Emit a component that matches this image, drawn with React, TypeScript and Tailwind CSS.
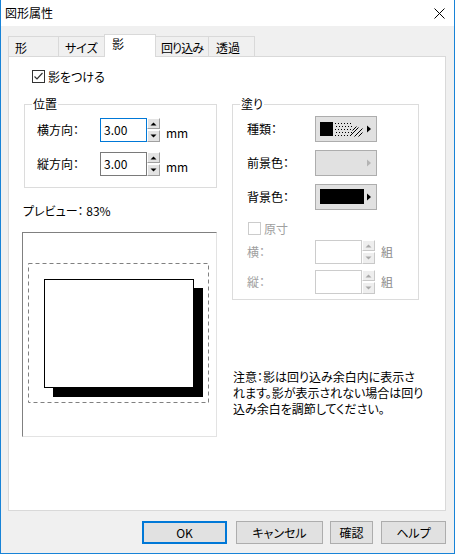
import React from 'react'

const tabs = [
  { label: '形', w: 'w-[51px] pl-[6px]' },
  { label: 'サイズ', w: 'w-[47px] pl-[6px]' },
  { label: '影', w: 'w-[52px]', active: true },
  { label: '回り込み', w: 'w-[54px] pl-[5px] tracking-[-0.9px]' },
  { label: '透過', w: 'w-[47px] pl-[7px]' },
]

function Check({ checked, disabled }: { checked?: boolean; disabled?: boolean }) {
  return (
    <div
      className={
        'w-[13px] h-[13px] shrink-0 border bg-white ' +
        (disabled ? 'border-[#cccccc]' : 'border-[#333333]')
      }
    >
      {checked && (
        <svg width="11" height="11" viewBox="0 0 11 11">
          <path d="M1.5 5.5 L4 8 L9.5 2" fill="none" stroke="#333" strokeWidth="1.2" />
        </svg>
      )}
    </div>
  )
}

function Arrow({ up, color }: { up?: boolean; color: string }) {
  return (
    <svg width="7" height="4" viewBox="0 0 7 4">
      <path d={up ? 'M0.5 3.5 L3.5 0.5 L6.5 3.5 Z' : 'M0.5 0.5 L3.5 3.5 L6.5 0.5 Z'} fill={color} />
    </svg>
  )
}

function Spin({ disabled }: { disabled?: boolean }) {
  const c = disabled ? '#a8a8a8' : '#000'
  const half =
    'h-[11px] flex items-center justify-center border border-t-white border-l-white ' +
    (disabled ? 'bg-[#eeeeee] border-r-[#c8c8c8] border-b-[#c8c8c8]' : 'bg-[#e3e3e3] border-r-[#a0a0a0] border-b-[#a0a0a0]')
  return (
    <div className="w-[13px] h-[24px] flex flex-col justify-between shrink-0">
      <div className={half}>
        <Arrow up color={c} />
      </div>
      <div className={half + ' h-[12px]'}>
        <Arrow color={c} />
      </div>
    </div>
  )
}

function Group({ title, children }: { title: string; children: React.ReactNode }) {
  return (
    <fieldset className="border border-[#dcdcdc]">
      <legend className="ml-[7px] px-[1px] leading-[16px]">{title}</legend>
      {children}
    </fieldset>
  )
}

function FillButton({ kind }: { kind: 'pattern' | 'disabled' | 'black' }) {
  return (
    <div className="w-[62px] h-[26px] border border-[#adadad] bg-[#e1e1e1]">
      <svg width="60" height="24" viewBox="0 0 60 24">
        {kind === 'pattern' && (
          <g>
            <rect x="4" y="5" width="13" height="14" fill="#000" />
            {[6, 9, 12, 15, 18].map((y, r) =>
              [19, 22, 25, 28, 31, 34].map((x) => (
                <rect key={x + '-' + y} x={x + (r % 2)} y={y} width="1" height="1" fill="#000" />
              ))
            )}
            <path d="M34.5 18.5 L42.5 10.5 M38.5 19.5 L46.5 11.5 M42.5 19.5 L46.5 15.5 M36.5 13.5 L40.5 9.5" stroke="#000" strokeWidth="1" />
          </g>
        )}
        {kind === 'black' && <rect x="4" y="4" width="44" height="15" fill="#000" />}
        <path d="M51 8.5 L55 12 L51 15.5 Z" fill={kind === 'disabled' ? '#b4b4b4' : '#000'} />
      </svg>
    </div>
  )
}

function PosRow({ label, focused, mt }: { label: string; focused?: boolean; mt: string }) {
  return (
    <div className={'flex items-start ' + mt}>
      <div className="w-[63px] h-[24px] flex items-center">{label}</div>
      <div
        className={
          'w-[47px] h-[24px] border bg-white pl-[3px] flex items-center ' +
          (focused ? 'border-[#0078d7]' : 'border-[#7a7a7a]')
        }
      >
        3.00
      </div>
      <Spin />
      <div className="ml-[6px] pt-[7px]">mm</div>
    </div>
  )
}

function TileRow({ label, mt }: { label: string; mt: string }) {
  return (
    <div className={'flex items-start text-[#a0a0a0] ' + mt}>
      <div className="w-[68px] h-[24px] flex items-center">{label}</div>
      <div className="w-[47px] h-[24px] border border-[#cccccc] bg-white" />
      <Spin disabled />
      <div className="ml-[6px] h-[24px] flex items-center text-[#8c8c8c]">組</div>
    </div>
  )
}

export default function App() {
  return (
    <div className="w-[455px] h-[554px] bg-[#f0f0f0] border-x border-b border-[#1883d7] flex flex-col font-['Noto_Sans_CJK_JP','Noto_Sans',sans-serif] text-[12px] leading-[16px] text-black [font-feature-settings:'palt']">
      {/* タイトルバー */}
      <div className="h-[26px] shrink-0 bg-white flex items-center justify-between pl-[4px] pr-[9px]">
        <span>図形属性</span>
        <svg width="11" height="11" viewBox="0 0 11 11">
          <path d="M0.5 0.5 L10.5 10.5 M10.5 0.5 L0.5 10.5" stroke="#000" strokeWidth="1" />
        </svg>
      </div>

      {/* タブ */}
      <div className="mt-[8px] ml-[7px] h-[22px] flex items-end">
        {tabs.map((t, i) =>
          t.active ? (
            <div
              key={t.label}
              className={t.w + ' h-[23px] -mb-px -ml-px relative z-10 bg-white border-x border-t border-[#d9d9d9] pl-[7px] pt-[1px] self-start'}
            >
              {t.label}
            </div>
          ) : (
            <div
              key={t.label}
              className={t.w + ' h-[20px] bg-[#f0f0f0] border-x border-t border-[#d9d9d9] pt-[3px] whitespace-nowrap overflow-hidden ' + (i > 0 ? '-ml-px' : '')}
            >
              {t.label}
            </div>
          )
        )}
      </div>

      {/* パネル */}
      <div className="ml-[7px] mr-[8px] h-[455px] shrink-0 border border-[#d9d9d9] bg-white pl-[15px] pt-[13px]">
        <div className="flex items-center h-[13px] ml-[8px] gap-[3px]">
          <Check checked />
          <span>影をつける</span>
        </div>

        <div className="mt-[13px] flex gap-[15px]">
          {/* 左 */}
          <div className="w-[193px]">
            <Group title="位置">
              <div className="pl-[12px] pt-[6px] pb-[11px]">
                <PosRow label="横方向：" focused mt="" />
                <PosRow label="縦方向：" mt="mt-[10px]" />
              </div>
            </Group>
            <div className="mt-[15px] -ml-px h-[16px]">プレビュー： 83%</div>
            <div className="mt-[13px] -ml-[2px] w-[195px] h-[205px] border border-l-[#808080] border-t-[#808080] border-r-[#e3e3e3] border-b-[#e3e3e3] bg-white">
              <svg width="193" height="203" viewBox="0 0 193 203">
                <rect x="5.5" y="30.5" width="180" height="139" fill="none" stroke="#808080" strokeDasharray="4 3" />
                <rect x="30" y="55" width="150" height="109" fill="#000" />
                <rect x="21.5" y="46.5" width="149" height="108" fill="#fff" stroke="#000" />
              </svg>
            </div>
          </div>

          {/* 右 */}
          <div className="w-[187px]">
            <Group title="塗り">
              <div className="pl-[14px] pt-[4px] pb-[5px]">
                <div className="flex items-center">
                  <div className="w-[68px]">種類：</div>
                  <FillButton kind="pattern" />
                </div>
                <div className="flex items-center mt-[8px]">
                  <div className="w-[68px]">前景色：</div>
                  <FillButton kind="disabled" />
                </div>
                <div className="flex items-center mt-[8px]">
                  <div className="w-[68px]">背景色：</div>
                  <FillButton kind="black" />
                </div>
                <div className="flex items-center h-[13px] mt-[12px] ml-px gap-[3px] text-[#a0a0a0]">
                  <Check disabled />
                  <span>原寸</span>
                </div>
                <TileRow label="横：" mt="mt-[5px]" />
                <TileRow label="縦：" mt="mt-[6px]" />
              </div>
            </Group>
            <p className="mt-[69px] pl-px whitespace-nowrap">
              注意：影は回り込み余白内に表示さ
              <br />
              れます。影が表示されない場合は回り
              <br />
              込み余白を調節してください。
            </p>
          </div>
        </div>
      </div>

      {/* ボタン */}
      <div className="mt-[10px] mr-[8px] flex justify-end">
        <button className="w-[85px] h-[23px] border-2 border-[#0078d7] bg-[#e1e1e1]">OK</button>
        <button className="w-[87px] h-[23px] ml-[9px] border border-[#adadad] bg-[#e1e1e1]">キャンセル</button>
        <button className="w-[43px] h-[23px] ml-[7px] border border-[#adadad] bg-[#e1e1e1]">確認</button>
        <button className="w-[65px] h-[23px] ml-[8px] border border-[#adadad] bg-[#e1e1e1]">ヘルプ</button>
      </div>
    </div>
  )
}
